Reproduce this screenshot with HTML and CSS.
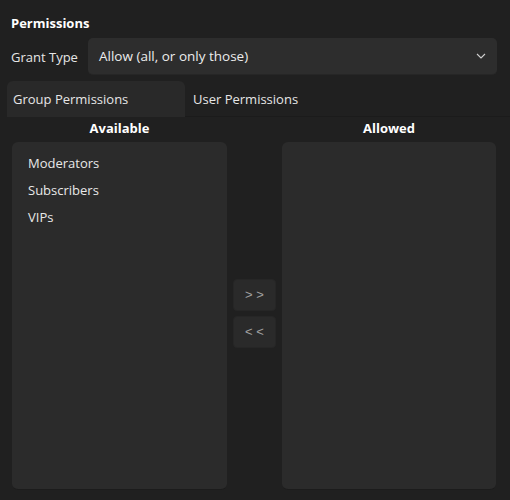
FILE: index.html
```html
<!DOCTYPE html>
<html>
<head>
<meta charset="utf-8">
<link rel="stylesheet" href="styles.css">
</head>
<body>
<div class="page">
  <div class="title">Permissions</div>
  <div class="grant-row">
    <span class="grant-label">Grant Type</span>
    <div class="combo">
      <span class="combo-text">Allow (all, or only those)</span>
      <svg class="chev" width="10" height="6" viewBox="0 0 10 6"><path d="M1 1 L5 5 L9 1" fill="none" stroke="#d0d0d0" stroke-width="1.1"/></svg>
    </div>
  </div>
  <div class="tabs">
    <div class="tab active">Group Permissions</div>
    <div class="tab">User Permissions</div>
  </div>
  <div class="panel">
    <div class="col-head">Available</div>
    <div></div>
    <div class="col-head">Allowed</div>
    <div class="list">
      <div class="item">Moderators</div>
      <div class="item">Subscribers</div>
      <div class="item">VIPs</div>
    </div>
    <div class="mid">
      <button class="mv">&gt; &gt;</button>
      <button class="mv">&lt; &lt;</button>
    </div>
    <div class="list"></div>
  </div>
</div>
</body>
</html>
```

FILE: styles.css
```css
html, body {
  margin: 0;
  padding: 0;
  background: #202020;
  color: #ffffff;
  font-family: "Open Sans", "Noto Sans", sans-serif;
  font-size: 13px;
}
.page {
  width: 510px;
  height: 500px;
  box-sizing: border-box;
  padding: 14px 13px 0 11px;
}
.title {
  font-weight: 700;
  font-size: 13px;
  line-height: 18px;
  height: 20px;
}
.grant-row {
  display: flex;
  align-items: center;
  margin-top: 4px;
}
.grant-label {
  width: 77px;
  color: #e6e6e6;
}
.combo {
  flex: 1;
  height: 37px;
  box-sizing: border-box;
  background: #2d2d2d;
  border-radius: 5px;
  display: flex;
  align-items: center;
  padding: 0 11px 0 11px;
  border-bottom: 1px solid #262626;
}
.combo-text {
  flex: 1;
  color: #ececec;
  font-size: 13.5px;
}
.tabs {
  display: flex;
  margin-top: 6px;
  margin-left: -4px;
  margin-right: -13px;
  height: 35px;
  border-bottom: 1px solid #1b1b1b;
}
.tab {
  display: flex;
  align-items: center;
  padding: 0 8px;
  color: #e6e6e6;
}
.tab.active {
  width: 178px;
  box-sizing: border-box;
  padding-left: 6px;
  background: #292929;
  border-radius: 6px 6px 0 0;
  margin-bottom: -1px;
}
.panel {
  display: grid;
  grid-template-columns: 215px 55px 214px;
  grid-template-rows: 25px 348px;
  margin-left: 1px;
}
.col-head {
  font-weight: 700;
  text-align: center;
  line-height: 22px;
}
.list {
  background: #2b2b2b;
  border-radius: 6px;
  border-bottom: 1px solid #1c1c1c;
  box-sizing: border-box;
  padding-top: 8px;
}
.item {
  height: 27px;
  line-height: 27px;
  padding-left: 16px;
  color: #e8e8e8;
}
.mid {
  display: flex;
  flex-direction: column;
  align-items: center;
  justify-content: center;
  gap: 5px;
  padding-bottom: 6px;
}
.mv {
  width: 43px;
  height: 32px;
  background: #2a2a2a;
  border: 1px solid #262626;
  border-radius: 4px;
  color: #a0a0a0;
  font-family: "Liberation Sans", sans-serif;
  font-size: 13px;
  padding: 0;
}
```
